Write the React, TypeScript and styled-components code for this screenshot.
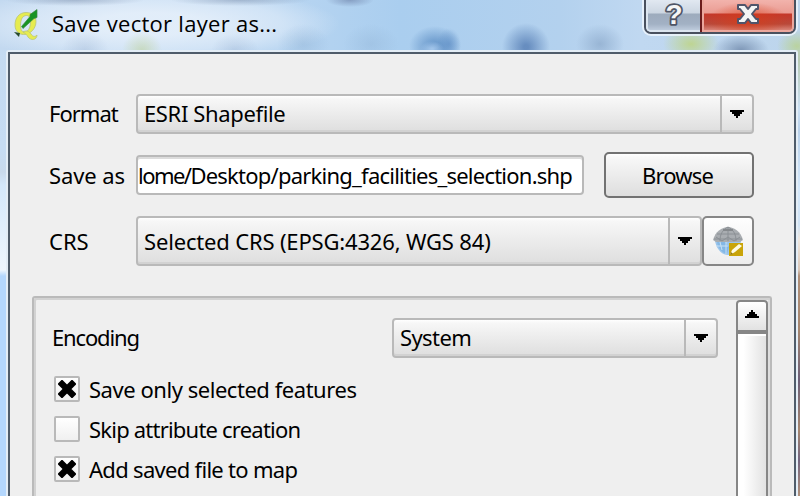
import React from 'react';
import styled, { createGlobalStyle } from 'styled-components';

const GlobalStyle = createGlobalStyle`
  * { box-sizing: border-box; }
  html, body { margin: 0; padding: 0; overflow: hidden; }
`;

const Desktop = styled.div`
  width: 800px;
  height: 496px;
  overflow: hidden;
  display: flex;
  flex-direction: column;
  font-family: 'Noto Sans', 'Liberation Sans', sans-serif;
  font-size: 22px;
  color: #000;
  background:
    linear-gradient(180deg, #c4daf0 0, #c6dcf3 150px, #c9daec 172px, #d4e8fb 185px, #eef6fd 270px, #b4d7fd 276px, #b4d7fd 100%) 0 0 / 8px 100% no-repeat,
    linear-gradient(180deg, #c4d8c8 0, #b9cbb4 60px, #cbe0f4 110px, #b9d1ea 130px, #d4e8fb 190px, #cfe2f4 225px, #efe7df 240px, #d8c6b8 270px, #b0907a 276px, #a58670 330px, #6d6078 380px, #a58670 430px, #746680 460px, #b0907a 100%) 796px 0 / 4px 100% no-repeat,
    #b6d3ef;
`;

const TitleBar = styled.header`
  height: 50px;
  flex: none;
  display: flex;
  align-items: flex-start;
  padding-left: 12px;
  background:
    radial-gradient(ellipse 70px 6px at 75px 0, rgba(120,140,170,.5), transparent),
    radial-gradient(ellipse 70px 6px at 240px 0, rgba(120,140,170,.5), transparent),
    radial-gradient(ellipse 24px 7px at 350px 0, rgba(105,125,165,.6), transparent),
    radial-gradient(ellipse 20px 18px at 142px 50px, rgba(186,206,140,.5), transparent),
    radial-gradient(ellipse 24px 18px at 85px 50px, rgba(140,165,200,.3), transparent),
    radial-gradient(ellipse 24px 16px at 235px 50px, rgba(140,165,200,.3), transparent),
    radial-gradient(ellipse 26px 20px at 303px 44px, rgba(140,175,210,.4), transparent),
    radial-gradient(ellipse 28px 20px at 371px 44px, rgba(140,175,210,.35), transparent),
    radial-gradient(ellipse 12px 8px at 432px 49px, rgba(172,205,240,.8) 10%, transparent),
    radial-gradient(ellipse 12px 16px at 449px 44px, rgba(80,130,190,.5), transparent),
    radial-gradient(ellipse 26px 20px at 435px 46px, rgba(90,140,195,.75) 20%, transparent),
    radial-gradient(ellipse 24px 24px at 526px 47px, rgba(85,125,180,.8) 10%, transparent),
    radial-gradient(ellipse 24px 20px at 600px 44px, rgba(130,160,195,.6), transparent),
    radial-gradient(ellipse 28px 18px at 691px 44px, rgba(190,212,130,.85), transparent),
    radial-gradient(ellipse 28px 16px at 741px 50px, rgba(100,125,160,.7), transparent),
    radial-gradient(ellipse 20px 16px at 797px 46px, rgba(185,210,150,.9), transparent),
    radial-gradient(ellipse 190px 38px at 150px 24px, rgba(232,241,251,.85) 30%, rgba(225,237,250,.6) 70%, transparent),
    linear-gradient(90deg, #c3d9f0 0, #b8d5f1 280px, #aaceef 400px, #b3d1ee 560px, #c0d8f1 640px, #bdd5ec 100%);
`;

const AppIcon = styled.svg`
  flex: none;
  margin-top: 7px;
`;

const Caption = styled.h1`
  margin: 0 auto 0 11px;
  font: 400 22px/30px 'Open Sans', 'Noto Sans', sans-serif;
  letter-spacing: 0.28px;
  padding-top: 8px;
  white-space: nowrap;
`;

const CaptionButtons = styled.div`
  display: flex;
  width: 152px;
  height: 34px;
  margin-right: 4px;
  border: 2px solid #49505e;
  border-top: 0;
  border-radius: 0 0 7px 7px;
  overflow: hidden;
  box-shadow: 0 0 0 2px rgba(236, 244, 253, .85);
`;

const CaptionButton = styled.button<{ $danger?: boolean }>`
  flex: ${p => (p.$danger ? '0 0 92px' : '1')};
  padding: 0;
  display: flex;
  align-items: flex-start;
  justify-content: center;
  border: 2px solid ${p => (p.$danger ? '#eba79d' : '#dce5ef')};
  border-top: 0;
  border-radius: 0 0 ${p => (p.$danger ? '4px 0' : '0 4px')};
  background: ${p =>
    p.$danger
      ? 'radial-gradient(ellipse 40px 18px at 50% 20px, rgba(216,60,24,.75), transparent), linear-gradient(180deg, #f2b3ac 0, #ea9c93 13px, #c4372a 14px, #b9493a 24px, #d98478 100%)'
      : 'linear-gradient(180deg, #e1e8f1 0, #ccd6e2 13px, #9dabbd 14px, #a2b1c4 24px, #bdcbdc 100%)'};
  box-shadow: ${p => (p.$danger ? '-2px 0 0 #6b1c1c, 0 2px 0 #571c1c' : 'none')};
`;

const Client = styled.main`
  flex: 1;
  margin: 0 2px 0 6px;
  border: 2px solid #e3edf6;
  border-bottom: 0;
  border-radius: 3px 3px 0 0;
  display: flex;
`;

const Panel = styled.div`
  flex: 1;
  border: 2px solid #4f5c6a;
  border-bottom: 0;
  background: #efefef;
  padding: 40px 22px 0;
  display: flex;
  flex-direction: column;
`;

const FormGrid = styled.div`
  display: grid;
  grid-template-columns: 87px 618px;
  grid-template-rows: 40px 46px 50px;
  row-gap: 18px;
  margin-left: 17px;
  align-items: center;
`;

const FieldRow = styled.div`
  display: flex;
  align-items: center;
`;

const Text = styled.span<{ $track?: number; $low?: boolean }>`
  display: inline-block;
  white-space: pre;
  line-height: 30px;
  letter-spacing: ${p => p.$track ?? 0}px;
  padding-bottom: ${p => (p.$low ? 0 : 2)}px;
`;

const Combo = styled.div<{ $w: number; $h: number; $arrow: number }>`
  width: ${p => p.$w}px;
  height: ${p => p.$h}px;
  flex: none;
  display: grid;
  grid-template-columns: 1fr ${p => p.$arrow}px;
  align-items: center;
  padding-left: 6px;
  border: 2px solid #b9b9b9;
  border-radius: 4px;
  background: linear-gradient(180deg, #fff 0, #f7f7f7 3px, #dedede 100%);
  box-shadow: inset 0 -2px 0 #d2d2d2;
`;

const ComboArrow = styled.div`
  height: 100%;
  display: flex;
  align-items: center;
  justify-content: center;
  border-left: 2px solid #b9b9b9;
`;

const PathInput = styled.div`
  width: 448px;
  height: 40px;
  display: flex;
  align-items: center;
  overflow: hidden;
  background: #fff;
  border: 2px solid #b9b9b9;
  border-radius: 4px;
  box-shadow: inset 0 2px 0 #dcdcdc;
`;

const PushButton = styled.button`
  width: 150px;
  height: 46px;
  margin-left: 20px;
  padding: 0 3px 0 0;
  font: inherit;
  color: inherit;
  border: 2px solid #727272;
  border-radius: 5px;
  background: linear-gradient(180deg, #fff 0, #f8f8f8 3px, #dedede 100%);
`;

const ToolButton = styled.button`
  width: 52px;
  height: 50px;
  padding: 0;
  display: flex;
  align-items: center;
  justify-content: center;
  border: 2px solid #868686;
  border-radius: 5px;
  background: linear-gradient(180deg, #fefefe, #ededed);
`;

const OptionsFrame = styled.section`
  flex: 1;
  margin-top: 30px;
  display: flex;
  justify-content: space-between;
  border: 2px solid #bababa;
  border-bottom: 0;
  border-radius: 3px 3px 0 0;
  box-shadow: inset 2px 2px 0 #d2d2d2, inset -2px 0 0 #dedede;
  padding: 2px 2px 0 18px;
`;

const Options = styled.div`
  width: 666px;
  padding-top: 18px;
`;

const EncodingRow = styled.div`
  display: flex;
  justify-content: space-between;
  align-items: center;
  height: 40px;
  margin-bottom: 12px;
`;

const CheckRow = styled.label`
  display: flex;
  align-items: center;
  height: 40px;
  gap: 9px;
  padding-left: 2px;
`;

const CheckBox = styled.span`
  width: 26px;
  height: 26px;
  margin-top: -2px;
  display: flex;
  align-items: center;
  justify-content: center;
  border: 2px solid #b9b9b9;
  border-radius: 2px;
  background: linear-gradient(180deg, #fff, #f0f0f0);
`;

const ScrollBar = styled.div`
  width: 32px;
  display: flex;
  flex-direction: column;
`;

const ScrollButton = styled.div`
  height: 34px;
  display: flex;
  justify-content: center;
  padding-top: 8px;
  border: 2px solid #868686;
  border-bottom-width: 4px;
  border-radius: 4px 4px 0 0;
  background: linear-gradient(180deg, #fff, #e2e2e2);
`;

const ScrollTrack = styled.div`
  flex: 1;
  border: solid #868686;
  border-width: 0 2px;
  background: linear-gradient(180deg, #fff 2px, transparent 2px), linear-gradient(90deg, #fff 20%, #e2e2e2);
`;

const Arrow = ({ up }: { up?: boolean }) => (
  <svg width="14" height="8" shapeRendering="crispEdges">
    <path d={up ? 'M6 0h2v2h2v2h2v2h2v2H0V6h2V4h2V2h2z' : 'M0 0h14v2h-2v2h-2v2H8v2H6V6H4V4H2V2H0z'} />
  </svg>
);

const CheckMark = () => (
  <svg width="18" height="18" viewBox="0 0 18 18">
    <path d="M4 4L14 14M14 4L4 14" stroke="#000" strokeWidth="6.400" strokeLinecap="square" />
  </svg>
);

const Globe = () => (
  <svg width="32" height="30" viewBox="0 0 32 30">
    <path d="M3 15C5 25 11 29 16 29s12-3 13-14z" fill="#9cc6ec" />
    <path d="M5 16h8l4 5-2 7c-5-1-9-6-10-12z" fill="#84b8e6" />
    <path d="M1 14C3 6 10 1 16 1s13 5 15 13l-3 2H4z" fill="#a9adb1" />
    <path d="M2 13h28M5 8h22M16 1v14M16 1C10 4 8 9 8 15M16 1c6 3 8 8 8 14M4 11l6 4 6-4 6 4 6-4" fill="none" stroke="#8b9095" strokeWidth="1" />
    <path d="M11 4h10" stroke="#85898d" strokeWidth="2" />
    <path d="M8 16l2 8M14 16v12M4 20h12" stroke="#c7e0f5" strokeWidth="1" />
    <rect x="17" y="17" width="14" height="13" fill="#c9a409" />
    <path d="M18 29l2-5 7-6 3 2-7 6z" fill="#fffbe2" />
    <path d="M18 29l3-1-2-2z" fill="#96790a" />
  </svg>
);

const options: { label: string; checked: boolean; track: number }[] = [
  { label: 'Save only selected features', checked: true, track: -0.46 },
  { label: 'Skip attribute creation', checked: false, track: -0.79 },
  { label: 'Add saved file to map', checked: true, track: -0.7 },
];

export default function App() {
  return (
    <Desktop>
      <GlobalStyle />
      <TitleBar>
        <AppIcon width="29" height="35" viewBox="0 0 29 35">
          <path d="M14 5.500C7 5.500 3 11 3 18c0 6 4 9.500 8.500 9.500 7 0 12.500-6 12.500-13 0-6-4-9-10-9zm.5 3c3 0 4 3 4 6.500 0 6-2.500 10-6 10-3 0-4-3-4-6.500 0-6 2-10 6-10z" fill="#e6ec50" stroke="#b9c478" strokeWidth=".8" fillRule="evenodd" />
          <path d="M11 25c4-2 6-1 8 2 2 3 4 3 6 1 0 5-6 6-9 2-1-2-3-4-5-5z" fill="#e6ec50" stroke="#b9c478" strokeWidth=".8" />
          <path d="M9.500 19.500L18 9.500l0-2 7-5 0 8-3 1L11 21.500z" fill="#179423" stroke="#3b8742" strokeWidth=".7" />
          <path d="M2 25l6 1-1 4-2-2z" fill="#274a2d" />
        </AppIcon>
        <Caption>Save vector layer as...</Caption>
        <CaptionButtons>
          <CaptionButton aria-label="Help">
            <svg width="22" height="30">
              <text x="11" y="24" textAnchor="middle" fontFamily="Liberation Sans, sans-serif" fontWeight="700" fontSize="28" fill="#f6f6f6" stroke="#4f5566" strokeWidth="3.600" paintOrder="stroke" strokeLinejoin="round">?</text>
            </svg>
          </CaptionButton>
          <CaptionButton $danger aria-label="Close">
            <svg width="24" height="26" viewBox="0 0 24 26">
              <path d="M2 5h7l3 4 3-4h7v4h-2l-4 5 4 5h2v4h-7l-3-4-3 4H2v-4h2l4-5-4-5H2z" fill="#f4f4f4" stroke="#50546a" strokeWidth="2" strokeLinejoin="round" />
            </svg>
          </CaptionButton>
        </CaptionButtons>
      </TitleBar>
      <Client>
        <Panel>
          <FormGrid>
            <Text $track={-1}>Format</Text>
            <Combo $w={618} $h={40} $arrow={32}>
              <Text $track={-0.36}>ESRI Shapefile</Text>
              <ComboArrow><Arrow /></ComboArrow>
            </Combo>
            <Text $low $track={-0.1}>Save as</Text>
            <FieldRow>
              <PathInput>
                <Text $low $track={-1.55}>lome/</Text>
                <Text $low $track={-0.77}>Desktop/parking_facilities_selection.shp</Text>
              </PathInput>
              <PushButton><Text $low $track={-0.85}>Browse</Text></PushButton>
            </FieldRow>
            <Text $low>CRS</Text>
            <FieldRow>
              <Combo $w={566} $h={50} $arrow={32}>
                <Text $low $track={-0.17}>Selected CRS (EPSG:4326, WGS 84)</Text>
                <ComboArrow><Arrow /></ComboArrow>
              </Combo>
              <ToolButton aria-label="Select CRS"><Globe /></ToolButton>
            </FieldRow>
          </FormGrid>
          <OptionsFrame>
            <Options>
              <EncodingRow>
                <Text $track={-1.15}>Encoding</Text>
                <Combo $w={326} $h={40} $arrow={32}>
                  <Text $track={-0.6}>System</Text>
                  <ComboArrow><Arrow /></ComboArrow>
                </Combo>
              </EncodingRow>
              {options.map(({ label, checked, track }) => (
                <CheckRow key={label}>
                  <CheckBox>{checked && <CheckMark />}</CheckBox>
                  <Text $track={track}>{label}</Text>
                </CheckRow>
              ))}
            </Options>
            <ScrollBar>
              <ScrollButton><Arrow up /></ScrollButton>
              <ScrollTrack />
            </ScrollBar>
          </OptionsFrame>
        </Panel>
      </Client>
    </Desktop>
  );
}
